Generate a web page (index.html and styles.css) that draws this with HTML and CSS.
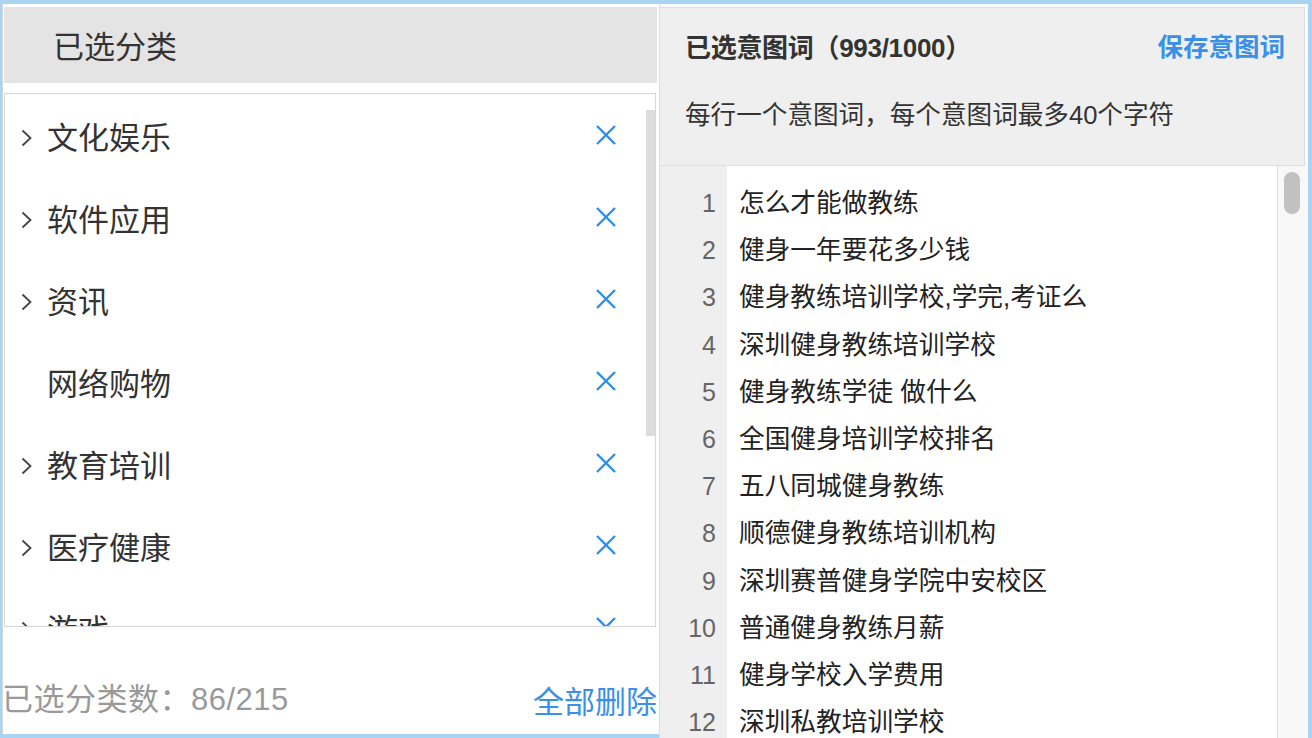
FILE: index.html
```html
<!DOCTYPE html>
<html lang="zh-CN">
<head>
    <meta charset="UTF-8">
    <title>已选分类与意图词</title>
    <link rel="stylesheet" href="styles.css">
</head>
<body>
    <div class="page">
        <section class="picked">
            <div class="picked-head">已选分类</div>

            <div class="cat-box">
                <ul class="cat-list">
                    <li class="cat-row">
                        <span class="cat-arrow"><svg viewBox="0 0 12 18"><path d="M2 1.5 L10 9 L2 16.5"/></svg></span>
                        <span class="cat-name">文化娱乐</span>
                        <span class="cat-del"><svg viewBox="0 0 22 22"><path d="M2 2 L20 20 M20 2 L2 20"/></svg></span>
                    </li>
                    <li class="cat-row">
                        <span class="cat-arrow"><svg viewBox="0 0 12 18"><path d="M2 1.5 L10 9 L2 16.5"/></svg></span>
                        <span class="cat-name">软件应用</span>
                        <span class="cat-del"><svg viewBox="0 0 22 22"><path d="M2 2 L20 20 M20 2 L2 20"/></svg></span>
                    </li>
                    <li class="cat-row">
                        <span class="cat-arrow"><svg viewBox="0 0 12 18"><path d="M2 1.5 L10 9 L2 16.5"/></svg></span>
                        <span class="cat-name">资讯</span>
                        <span class="cat-del"><svg viewBox="0 0 22 22"><path d="M2 2 L20 20 M20 2 L2 20"/></svg></span>
                    </li>
                    <li class="cat-row">
                        <span class="cat-arrow"></span>
                        <span class="cat-name">网络购物</span>
                        <span class="cat-del"><svg viewBox="0 0 22 22"><path d="M2 2 L20 20 M20 2 L2 20"/></svg></span>
                    </li>
                    <li class="cat-row">
                        <span class="cat-arrow"><svg viewBox="0 0 12 18"><path d="M2 1.5 L10 9 L2 16.5"/></svg></span>
                        <span class="cat-name">教育培训</span>
                        <span class="cat-del"><svg viewBox="0 0 22 22"><path d="M2 2 L20 20 M20 2 L2 20"/></svg></span>
                    </li>
                    <li class="cat-row">
                        <span class="cat-arrow"><svg viewBox="0 0 12 18"><path d="M2 1.5 L10 9 L2 16.5"/></svg></span>
                        <span class="cat-name">医疗健康</span>
                        <span class="cat-del"><svg viewBox="0 0 22 22"><path d="M2 2 L20 20 M20 2 L2 20"/></svg></span>
                    </li>
                    <li class="cat-row">
                        <span class="cat-arrow"><svg viewBox="0 0 12 18"><path d="M2 1.5 L10 9 L2 16.5"/></svg></span>
                        <span class="cat-name">游戏</span>
                        <span class="cat-del"><svg viewBox="0 0 22 22"><path d="M2 2 L20 20 M20 2 L2 20"/></svg></span>
                    </li>
                </ul>
                <div class="cat-scroll"></div>
            </div>

            <div class="picked-foot">
                <span class="picked-count">已选分类数：86/215</span>
                <a class="del-all">全部删除</a>
            </div>
        </section>

        <section class="intent">
            <div class="intent-head">
                <div class="intent-title">
                    <h2>已选意图词（993/1000）</h2>
                    <a class="save">保存意图词</a>
                </div>
                <p class="intent-tip">每行一个意图词，每个意图词最多40个字符</p>
            </div>

            <div class="editor">
                <div class="gutter">
                    <div>1</div><div>2</div><div>3</div><div>4</div>
                    <div>5</div><div>6</div><div>7</div><div>8</div>
                    <div>9</div><div>10</div><div>11</div><div>12</div>
                </div>
                <div class="lines">
                    <div>怎么才能做教练</div>
                    <div>健身一年要花多少钱</div>
                    <div>健身教练培训学校,学完,考证么</div>
                    <div>深圳健身教练培训学校</div>
                    <div>健身教练学徒 做什么</div>
                    <div>全国健身培训学校排名</div>
                    <div>五八同城健身教练</div>
                    <div>顺德健身教练培训机构</div>
                    <div>深圳赛普健身学院中安校区</div>
                    <div>普通健身教练月薪</div>
                    <div>健身学校入学费用</div>
                    <div>深圳私教培训学校</div>
                </div>
                <div class="vscroll"><div class="vscroll-thumb"></div></div>
            </div>
        </section>
    </div>
</body>
</html>
```

FILE: styles.css
```css
:root {
    --edge: #a9d4f2;
    --text: #333;
    --muted: #999;
    --blue: #3a90e8;
    --line: #d6d6d6;
    --font-cn: "Noto Sans CJK SC", "Noto Sans", sans-serif;
    --font-num: "Liberation Sans", "Noto Sans CJK SC", sans-serif;
}

* {
    margin: 0;
    padding: 0;
    box-sizing: border-box;
}

html, body {
    height: 738px;
    overflow: hidden;
}

body {
    background: var(--edge);
    font-family: var(--font-cn);
    color: var(--text);
}

a {
    color: var(--blue);
    text-decoration: none;
    cursor: pointer;
}

.page {
    display: flex;
    height: 738px;
    padding: 4px 4px 0 2px;
}

/* left: picked categories */

.picked {
    width: 657px;
    height: 730px;
    background: #fff;
    border-left: 1px solid #d8d8d8;
    padding-top: 3px;
    overflow: hidden;
    display: flex;
    flex-direction: column;
}

.picked-head {
    height: 76px;
    margin-left: 1px;
    margin-right: 2px;
    padding-left: 49px;
    background: #e4e4e4;
    font-size: 31px;
    line-height: 76px;
    color: #333;
}

.cat-box {
    position: relative;
    height: 534px;
    margin: 10px 3px 0 1px;
    border: 1px solid var(--line);
    overflow: hidden;
}

.cat-list {
    list-style: none;
    padding-top: 1px;
}

.cat-row {
    display: flex;
    align-items: center;
    height: 82px;
}

.cat-arrow {
    width: 42px;
    padding-left: 15px;
    padding-top: 3px;
    display: flex;
    align-items: center;
}

.cat-arrow svg {
    width: 13px;
    height: 18px;
    fill: none;
    stroke: #444;
    stroke-width: 1.8;
}

.cat-name {
    flex: 1;
    font-size: 31px;
    line-height: 40px;
    color: #333;
}

.cat-del {
    width: 22px;
    height: 22px;
    margin-right: 38px;
    margin-top: -2px;
}

.cat-del svg {
    display: block;
    width: 22px;
    height: 22px;
    fill: none;
    stroke: #2f8ee8;
    stroke-width: 2.4;
}

.cat-scroll {
    position: absolute;
    top: 16px;
    right: 0;
    width: 9px;
    height: 326px;
    background: #dcdcdc;
}

.picked-foot {
    flex: 1;
    display: flex;
    justify-content: space-between;
    align-items: flex-start;
    padding-top: 55px;
    font-size: 31px;
    line-height: 36px;
    margin-left: -1px;
}

.picked-count {
    color: var(--muted);
    font-family: var(--font-num);
    letter-spacing: 0.5px;
}

.picked-count,
.del-all {
    white-space: nowrap;
}

.del-all {
    color: var(--blue);
    margin-right: 2px;
}

/* right: intent words */

.intent {
    flex: 1;
    background: #fafafa;
    border-left: 1px solid #dcdcdc;
    padding-top: 3px;
    display: flex;
    flex-direction: column;
    overflow: hidden;
}

.intent-head {
    height: 159px;
    margin-right: 3px;
    background: #efefef;
    border: 1px solid #dedede;
    border-left: none;
    padding: 21px 19px 0 25px;
}

.intent-title {
    display: flex;
    justify-content: space-between;
    align-items: center;
    height: 32px;
}

.intent-title h2 {
    font-family: var(--font-num);
    font-size: 26px;
    font-weight: 700;
    color: #333;
    letter-spacing: -0.3px;
}

.save {
    font-size: 25.5px;
    font-weight: 700;
    line-height: 32px;
}

.intent-tip {
    margin-top: 38px;
    font-family: var(--font-num);
    font-size: 25.6px;
    line-height: 32px;
    color: #333;
}

.editor {
    flex: 1;
    display: flex;
    margin-right: 3px;
    background: #fff;
    overflow: hidden;
}

.gutter {
    width: 67px;
    background: #efefef;
    padding: 14px 11px 0 0;
    text-align: right;
    font-family: var(--font-num);
    font-size: 25px;
    line-height: 47.2px;
    color: #666;
}

.lines {
    flex: 1;
    padding: 14px 0 0 12px;
    font-family: var(--font-num);
    font-size: 25.7px;
    line-height: 47.2px;
    color: #222;
    white-space: nowrap;
}

.vscroll {
    position: relative;
    width: 28px;
    background: #f8f8f8;
    border-left: 1px solid #e2e2e2;
}

.vscroll-thumb {
    position: absolute;
    top: 6px;
    left: 6px;
    width: 16px;
    height: 42px;
    border-radius: 8px;
    background: #c1c1c1;
}
```
